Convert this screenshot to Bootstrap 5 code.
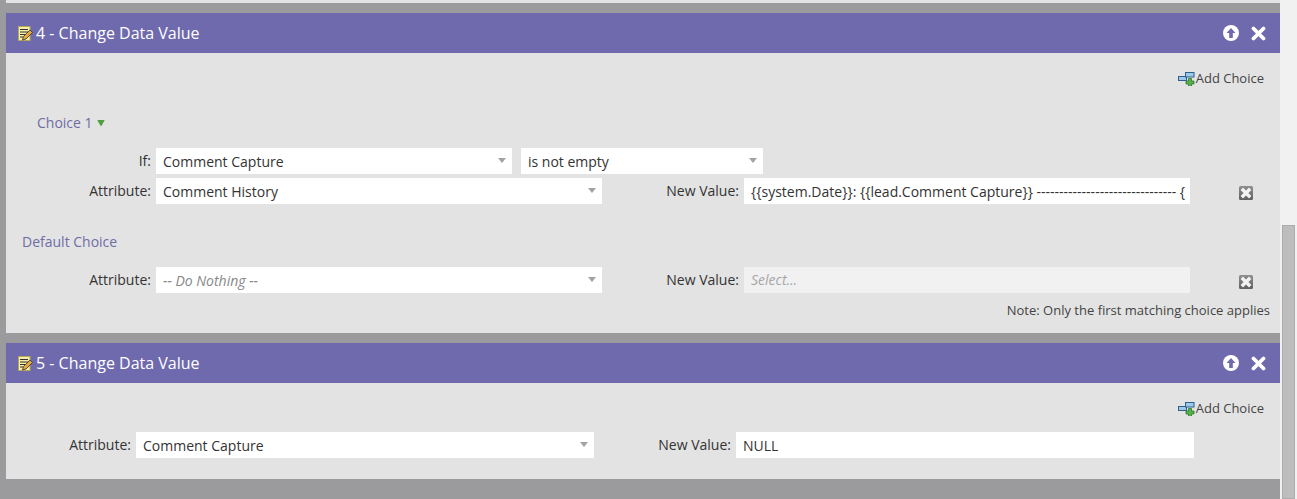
<!DOCTYPE html>
<html lang="en">
<head>
<meta charset="utf-8">
<title>Change Data Value</title>
<link rel="stylesheet" href="https://cdn.jsdelivr.net/npm/bootstrap@5.3.0/dist/css/bootstrap.min.css">
<style>
html,body{height:499px;overflow:hidden}
body{background:#9b9b9d;font-family:"Open Sans","Liberation Sans",sans-serif;font-size:14px;color:#333}
.flow-area{width:1280px;padding:0 0 0 6px}
.top-strip{height:3px;background:#e3e3e3}
.sidebar-track{width:17px;height:499px;background:#f1f1f1;padding-top:225px;padding-left:2px}
.sidebar-thumb{width:13px;height:274px;background:#bdbdbd;border:1px solid #acacac}
.step-panel{margin-top:10px;background:#e3e3e3}
.step-head{height:40px;background:#6e6aad;color:#fff;font-size:16px;padding-left:12px;padding-right:14px}
.step-title{margin-left:3px;font-weight:500}
.head-tools{gap:12px}
.body-one{height:280px;padding-top:16px}
.body-two{height:96px;padding-top:16px}
.add-line{height:18px;padding-right:16px;font-size:13px;color:#444;gap:1px;line-height:18px}
.choice-name{color:#6f6da6;font-size:14px;line-height:20px}
.choice-one{margin:26px 0 0 31px;gap:4px}
.choice-def{margin:27px 0 0 16px}
.form-line{height:26px;line-height:26px;font-size:14px}
.lab{text-align:right;color:#333;padding-right:5px;flex:none}
.lab-a{width:150px}
.lab-wide{width:130px}
.lab-nv{width:142px}
.fake-select{height:26px;background:#fff;padding:1px 6px 0 7px;flex:none;color:#333;white-space:nowrap}
.sel-if{width:356px}
.sel-op{width:242px;margin-left:9px}
.sel-attr{width:446px}
.sel-wide{width:458px}
.caret-mark{width:0;height:0;border-left:4.5px solid transparent;border-right:4.5px solid transparent;border-top:5px solid #a3a3a3;margin-bottom:3px}
.txt-field{height:26px;width:446px;background:#fff;padding:1px 4px 0 7px;flex:none;overflow:hidden;white-space:nowrap;color:#333}
.txt-wide{width:458px}
.txt-off{background:#f1f1f1;color:#a6a6a6;font-style:italic;padding-top:0}
.is-off{color:#888;font-style:italic}
.del-wrap{margin:4px 0 0 49px;width:14px;height:14px}
.gap-a{margin-top:4px}
.gap-b{margin-top:15px}
.gap-c{margin-top:15px}
.gap-d{margin-top:15px}
.note-line{font-size:13px;text-align:right;padding-right:10px;margin-top:8px;line-height:18px;color:#444}
</style>
</head>
<body>
<svg width="0" height="0" class="d-block position-absolute">
  <defs>
    <linearGradient id="delfill" x1="0" y1="0" x2="0" y2="1"><stop offset="0" stop-color="#8f8f8f"/><stop offset="1" stop-color="#5f5f5f"/></linearGradient>
    <symbol id="ico-note" viewBox="0 0 15 16"><rect x=".5" y="1.500" width="11.500" height="14" fill="#f7efa6" stroke="#b5a75a"/><path d="M2 4.500h8M2 7h8M2 9.500h5M2 12h3" stroke="#333" stroke-width="1"/><path d="M4.500 15l1-3.500 6.500-6.500 2.500 2.500-6.500 6.500z" fill="#e6a63f" stroke="#333" stroke-width=".8"/></symbol>
    <symbol id="ico-up" viewBox="0 0 16 16"><circle cx="8" cy="8" r="8" fill="#fff"/><path d="M8 3l4.500 5H9.800v5H6.200V8H3.500z" fill="#6e6aad"/></symbol>
    <symbol id="ico-close" viewBox="0 0 15 15"><path d="M2.500 2.500l10 10M12.500 2.500l-10 10" stroke="#fff" stroke-width="3.800" stroke-linecap="round"/></symbol>
    <symbol id="ico-add" viewBox="0 0 17 15"><rect x=".5" y="5.500" width="8" height="4" fill="#9cc8ea" stroke="#2f5f8c"/><rect x="7.500" y="1.500" width="8.500" height="4.500" fill="#9cc8ea" stroke="#2f5f8c"/><path d="M10.500 7.500v2.500H8v3h2.500V15.500h3V13H16v-3h-2.500V7.500z" fill="#57b14a" stroke="#2d7a2a" stroke-width=".8"/></symbol>
    <symbol id="ico-del" viewBox="0 0 14 14"><rect width="14" height="14" rx="1.500" fill="url(#delfill)"/><path d="M4 4l6 6M10 4l-6 6" stroke="#f2f2f2" stroke-width="3.400" stroke-linecap="square"/></symbol>
  </defs>
</svg>
<div class="d-flex">
  <div class="flow-area">
    <div class="top-strip"></div>

    <section class="step-panel">
      <div class="step-head d-flex align-items-center justify-content-between">
        <div class="d-flex align-items-center">
          <svg width="15" height="16" class="d-block"><use href="#ico-note"/></svg>
          <span class="step-title">4 - Change Data Value</span>
        </div>
        <div class="d-flex align-items-center head-tools">
          <svg width="16" height="16" class="d-block"><use href="#ico-up"/></svg>
          <svg width="15" height="15" class="d-block"><use href="#ico-close"/></svg>
        </div>
      </div>
      <div class="body-one">
        <div class="add-line d-flex align-items-center justify-content-end">
          <svg width="17" height="15" class="d-block"><use href="#ico-add"/></svg>
          <span>Add Choice</span>
        </div>
        <div class="choice-one d-flex align-items-center">
          <span class="choice-name">Choice 1</span>
          <svg width="8" height="8" viewBox="0 0 8 8" class="d-block"><path d="M1 1h6q.8 0 .4.8L4.500 6.800q-.5.700-1 0L.6 1.800Q.2 1 1 1z" fill="#4f9f3f"/></svg>
        </div>
        <div class="form-line d-flex gap-c">
          <div class="lab lab-a">If:</div>
          <div class="fake-select sel-if d-flex align-items-center justify-content-between"><span>Comment Capture</span><i class="caret-mark"></i></div>
          <div class="fake-select sel-op d-flex align-items-center justify-content-between"><span>is not empty</span><i class="caret-mark"></i></div>
        </div>
        <div class="form-line d-flex gap-a">
          <div class="lab lab-a">Attribute:</div>
          <div class="fake-select sel-attr d-flex align-items-center justify-content-between"><span>Comment History</span><i class="caret-mark"></i></div>
          <div class="lab lab-nv">New Value:</div>
          <div class="txt-field">{{system.Date}}: {{lead.Comment Capture}} ------------------------------- {</div>
          <div class="del-wrap align-self-center"><svg width="14" height="14" class="d-block"><use href="#ico-del"/></svg></div>
        </div>
        <div class="choice-def"><span class="choice-name">Default Choice</span></div>
        <div class="form-line d-flex gap-b">
          <div class="lab lab-a">Attribute:</div>
          <div class="fake-select sel-attr d-flex align-items-center justify-content-between"><span class="is-off">-- Do Nothing --</span><i class="caret-mark"></i></div>
          <div class="lab lab-nv">New Value:</div>
          <div class="txt-field txt-off">Select...</div>
          <div class="del-wrap align-self-center"><svg width="14" height="14" class="d-block"><use href="#ico-del"/></svg></div>
        </div>
        <div class="note-line">Note: Only the first matching choice applies</div>
      </div>
    </section>

    <section class="step-panel">
      <div class="step-head d-flex align-items-center justify-content-between">
        <div class="d-flex align-items-center">
          <svg width="15" height="16" class="d-block"><use href="#ico-note"/></svg>
          <span class="step-title">5 - Change Data Value</span>
        </div>
        <div class="d-flex align-items-center head-tools">
          <svg width="16" height="16" class="d-block"><use href="#ico-up"/></svg>
          <svg width="15" height="15" class="d-block"><use href="#ico-close"/></svg>
        </div>
      </div>
      <div class="body-two">
        <div class="add-line d-flex align-items-center justify-content-end">
          <svg width="17" height="15" class="d-block"><use href="#ico-add"/></svg>
          <span>Add Choice</span>
        </div>
        <div class="form-line d-flex gap-d">
          <div class="lab lab-wide">Attribute:</div>
          <div class="fake-select sel-wide d-flex align-items-center justify-content-between"><span>Comment Capture</span><i class="caret-mark"></i></div>
          <div class="lab lab-nv">New Value:</div>
          <div class="txt-field txt-wide">NULL</div>
        </div>
      </div>
    </section>
  </div>
  <div class="sidebar-track"><div class="sidebar-thumb"></div></div>
</div>
<script src="https://cdn.jsdelivr.net/npm/bootstrap@5.3.0/dist/js/bootstrap.bundle.min.js"></script>
</body>
</html>
